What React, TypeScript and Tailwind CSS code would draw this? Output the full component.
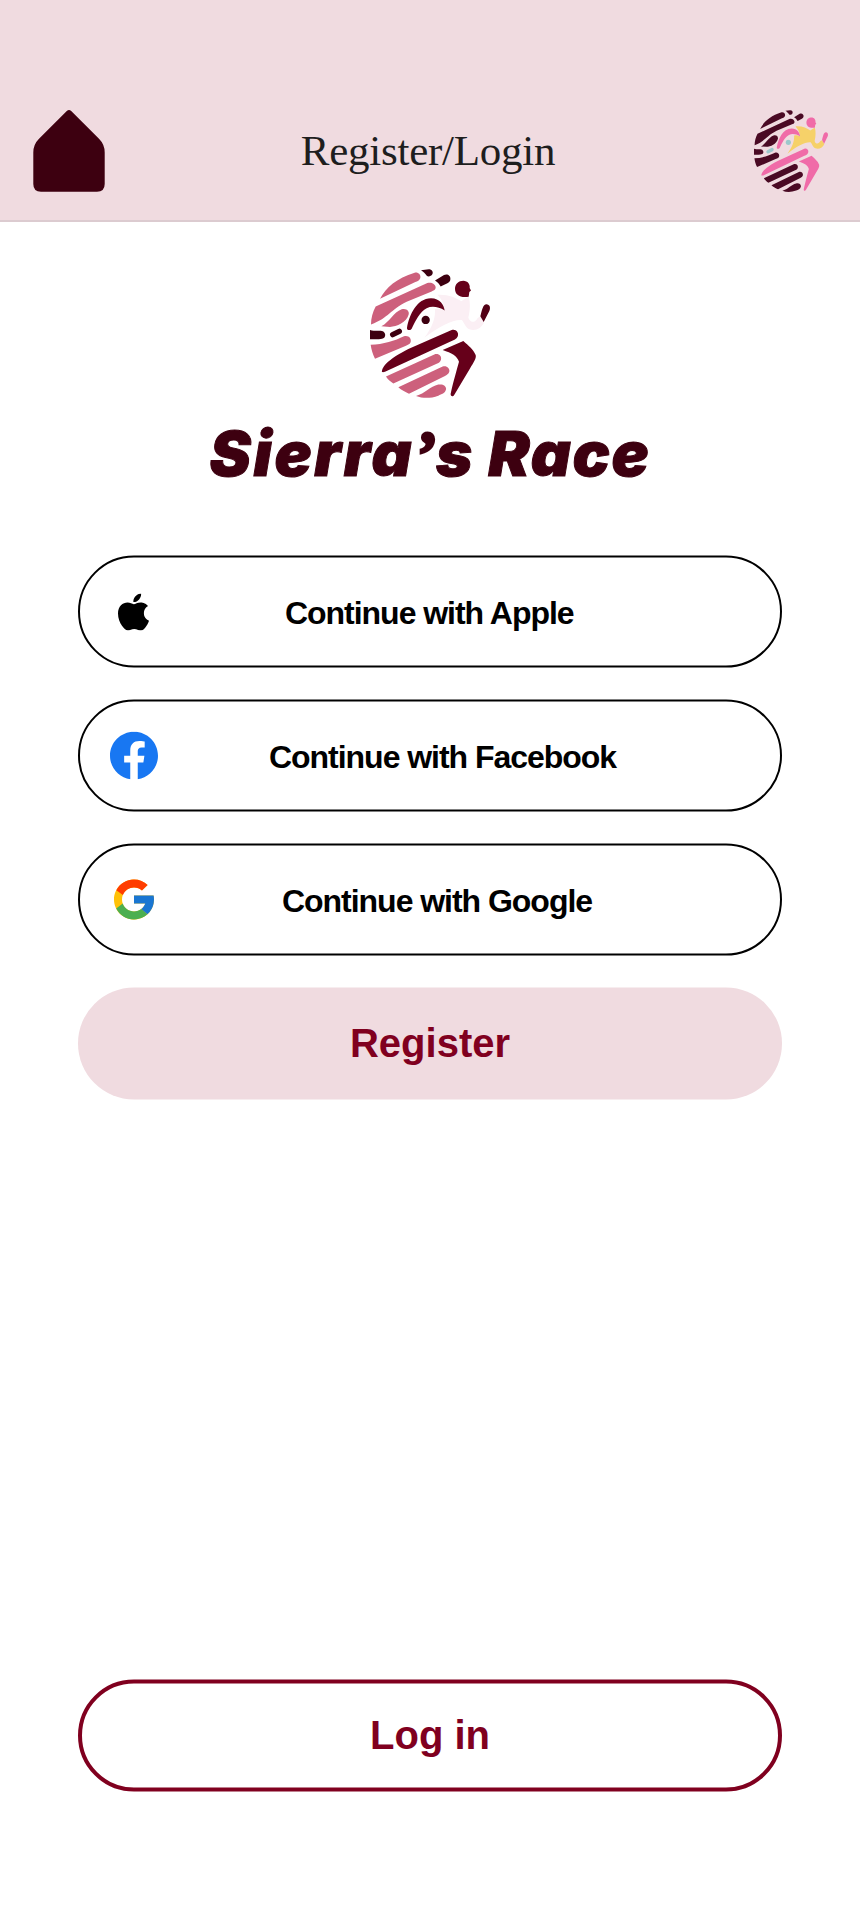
import type { ReactNode } from "react";

type Palette = {
  stripe: string;
  dark: string;
  limb: string;
  shirt: string;
  dot: string;
};

const brandPalette: Palette = {
  stripe: "#cd607c",
  dark: "#3d0010",
  limb: "#66001a",
  shirt: "#fbeff4",
  dot: "#3d0010",
};

const brightPalette: Palette = {
  stripe: "#4a0a24",
  dark: "#4a0a24",
  limb: "#f06ba8",
  shirt: "#f6d169",
  dot: "#9cc8cc",
};

function RunnerLogo({ palette, className, hand }: { palette: Palette; className: string; hand: string }) {
  return (
    <svg className={className} viewBox="90 58 360 385" preserveAspectRatio="none" aria-hidden="true">
      <g fill={palette.stripe}>
        <path d="M120 147C138 112 170 86 224 69C235 67 243 75 241 85C239 92 232 95 226 97Z" />
        <path d="M107 170L262 100C277 96 288 105 287 115C285 122 280 123 275 125L200 156C150 180 148 203 93 224C93 205 98 186 107 170Z" />
        <path d="M124 229C150 215 160 187 185 178C200 174 209 184 206 194C200 218 170 230 150 231Z" />
        <path d="M92 284C130 284 165 272 192 259C205 255 215 265 212 276C210 283 204 284 198 287L105 326C98 312 94 298 92 284Z" />
        <path d="M138 379L283 313C296 309 306 318 303 329C301 336 295 339 290 341L160 400C150 393 143 387 138 379Z" />
        <path d="M175 411L308 349C320 345 330 355 328 364C326 372 320 374 315 377L207 430C195 425 184 419 175 411Z" />
        <path d="M228 437C255 430 270 409 295 403C310 400 320 408 318 418C315 430 305 432 295 436C272 444 250 445 228 437Z" />
      </g>
      <g fill={palette.dark}>
        <path d="M243 62L266 59C276 59 281 67 277 74C274 80 265 82 261 79C255 72 251 67 243 62Z" />
        <path d="M285 92L312 76C322 71 333 78 331 89C330 97 325 99 302 110C298 102 292 96 285 92Z" />
        <path d="M90 240C105 244 118 241 126 243C138 246 138 261 130 265C120 270 105 267 90 268Z" />
      </g>
      <path d="M158 254L178 244" stroke={palette.dot} strokeWidth="16" strokeLinecap="round" />
      <circle cx="257" cy="210" r="12.5" fill={palette.dot} />
      <path
        fill={palette.shirt}
        d="M292 135C325 133 348 144 364 154C371 150 379 144 386 141C391 157 391 180 385 203C389 218 404 221 413 204L421 200L432 218C425 235 405 245 388 238C375 232 372 215 365 210C338 208 300 228 253 263C275 235 287 205 285 178C300 174 306 180 313 181C313 164 303 145 292 135Z"
      />
      <g fill={palette.limb}>
        <path d="M201 233C208 195 230 145 273 145C300 145 312 165 314 182C295 170 275 168 260 175C240 184 225 215 215 236C208 244 200 240 201 233Z" />
        <path d="M386 141C360 145 345 135 345 117C345 102 356 93 370 93C383 93 391 104 389 115L393 122L388 127Z" />
        <path d="M126 362C130 345 150 325 205 297L335 240C347 236 356 246 354 256C352 266 345 269 335 273L135 365C128 367 124 366 126 362Z" />
        <path d="M308 300L370 273C385 287 400 297 407 315C410 325 400 338 390 355L343 433C338 441 331 437 332 430C340 395 350 360 357 335C352 318 335 309 308 300Z" />
      </g>
      <path fill={hand} d="M431 216L421 199C426 182 428 163 440 163C450 164 452 173 448 183Z" />
    </svg>
  );
}

function HomeIcon() {
  return (
    <svg className="h-[82px] w-[72px]" viewBox="0 0 72 82" aria-hidden="true">
      <path
        fill="#3d0010"
        d="M33.8 1Q36 -1 38.2 1L66 28.8Q71.7 34.500 71.700 42.500V74Q71.700 81.700 64 81.700H8Q.3 81.700 .3 74V42.500Q.3 34.500 6 28.800Z"
      />
    </svg>
  );
}

function AppleIcon() {
  return (
    <svg className="mr-0.5 h-[37px] w-[31px]" viewBox="0 0 814 1000" preserveAspectRatio="none" aria-hidden="true">
      <path d="M788.100 340.900c-5.800 4.500-108.200 62.200-108.200 190.500 0 148.400 130.300 200.900 134.200 202.200-.6 3.200-20.700 71.900-68.700 141.900-42.800 61.600-87.500 123.100-155.500 123.100s-85.500-39.500-164-39.500c-76.500 0-103.700 40.800-165.900 40.800s-105.600-57-155.500-127C46.700 790.700 0 663 0 541.800c0-194.400 126.400-297.500 250.800-297.500 66.100 0 121.200 43.400 162.700 43.400 39.500 0 101.100-46 176.300-46 28.500 0 130.900 2.600 198.300 99.200zm-234-181.500c31.100-36.900 53.100-88.100 53.100-139.300 0-7.100-.6-14.300-1.900-20.100-50.600 1.900-110.800 33.700-147.100 75.800-28.500 32.400-55.100 83.600-55.100 135.500 0 7.800 1.300 15.600 1.900 18.100 3.200.6 8.400 1.300 13.600 1.300 45.400 0 102.500-30.400 135.500-71.300z" />
    </svg>
  );
}

function FacebookIcon() {
  return (
    <svg className="size-12" viewBox="0 0 24 24" aria-hidden="true">
      <path
        fill="#1877f2"
        d="M24 12.073c0-6.627-5.373-12-12-12s-12 5.373-12 12c0 5.990 4.388 10.954 10.125 11.854v-8.385H7.078v-3.470h3.047V9.430c0-3.007 1.792-4.669 4.533-4.669 1.312 0 2.686.235 2.686.235v2.953H15.830c-1.491 0-1.956.925-1.956 1.874v2.250h3.328l-.532 3.470h-2.796v8.385C19.612 23.027 24 18.062 24 12.073z"
      />
    </svg>
  );
}

function GoogleIcon() {
  return (
    <svg className="size-12" viewBox="0 0 48 48" aria-hidden="true">
      <path fill="#ffc107" d="M43.611 20.083H42V20H24v8h11.303c-1.649 4.657-6.080 8-11.303 8-6.627 0-12-5.373-12-12s5.373-12 12-12c3.059 0 5.842 1.154 7.961 3.039l5.657-5.657C34.046 6.053 29.268 4 24 4 12.955 4 4 12.955 4 24s8.955 20 20 20 20-8.955 20-20c0-1.341-.138-2.650-.389-3.917z" />
      <path fill="#ff3d00" d="M6.306 14.691l6.571 4.819C14.655 15.108 18.961 12 24 12c3.059 0 5.842 1.154 7.961 3.039l5.657-5.657C34.046 6.053 29.268 4 24 4 16.318 4 9.656 8.337 6.306 14.691z" />
      <path fill="#4caf50" d="M24 44c5.166 0 9.860-1.977 13.409-5.192l-6.190-5.238C29.211 35.091 26.715 36 24 36c-5.202 0-9.619-3.317-11.283-7.946l-6.522 5.025C9.505 39.556 16.227 44 24 44z" />
      <path fill="#1976d2" d="M43.611 20.083H42V20H24v8h11.303c-.792 2.237-2.231 4.166-4.087 5.571l6.193 5.238C36.971 39.205 44 34 44 24c0-1.341-.138-2.650-.389-3.917z" />
    </svg>
  );
}

function SocialButton({ icon, label, labelClass }: { icon: ReactNode; label: string; labelClass: string }) {
  return (
    <button className="flex h-28 w-full translate-y-[0.5px] items-center rounded-full border-2 border-black pl-[30px] text-black">
      <span className="flex size-12 shrink-0 items-center justify-center">{icon}</span>
      <span className={`pt-px text-[32px] leading-10 font-bold whitespace-nowrap ${labelClass}`}>{label}</span>
    </button>
  );
}

export default function App() {
  return (
    <div className="flex h-[1918px] w-[860px] flex-col bg-white font-['Liberation_Sans',Arial,sans-serif]">
      <header className="flex h-[222px] shrink-0 items-start justify-between border-b-2 border-[#dccbd0] bg-[#f0dbe0] pt-[110px] pr-8 pl-[33px]">
        <HomeIcon />
        <h1 className="mt-[13px] mr-[3px] text-[43px] leading-[56px] tracking-[-0.25px] whitespace-nowrap text-[#1e1e1e] font-['Liberation_Serif',serif]">
          Register/Login
        </h1>
        <RunnerLogo palette={brightPalette} hand="#f06ba8" className="h-[82px] w-[74px]" />
      </header>

      <main className="flex grow flex-col items-center px-[78px]">
        <RunnerLogo palette={brandPalette} hand="#520015" className="mt-[47px] h-[129px] w-[120px] shrink-0" />
        <p className="mt-[17px] h-[81px] text-[62px] leading-[78px] font-black tracking-[1.7px] whitespace-nowrap text-[#3d0010] italic [-webkit-text-stroke:1px_#3d0010] font-['Inter',sans-serif]">
          <span className="tracking-[2.6px]">Sierra</span>
          <span className="text-[66px] leading-none tracking-normal [-webkit-text-stroke:3px_#3d0010] font-['Liberation_Serif',serif]">’</span>
          s Race
        </p>

        <div className="mt-[59px] flex w-full flex-col gap-8">
          <SocialButton icon={<AppleIcon />} label="Continue with Apple" labelClass="ml-[127px] tracking-[-1.03px]" />
          <SocialButton icon={<FacebookIcon />} label="Continue with Facebook" labelClass="ml-[111px] tracking-[-1.03px]" />
          <SocialButton icon={<GoogleIcon />} label="Continue with Google" labelClass="ml-[124px] tracking-[-1.03px]" />
          <button className="h-28 w-full translate-y-[0.5px] rounded-full bg-[#f0dbe0] pb-0.5 text-[40px] font-bold text-[#80001f]">
            Register
          </button>
        </div>

        <button className="mt-auto mb-[127px] h-28 w-full shrink-0 translate-y-[0.5px] rounded-full border-4 border-[#80001f] pb-0.5 text-[40px] font-bold text-[#80001f]">
          Log in
        </button>
      </main>
    </div>
  );
}
